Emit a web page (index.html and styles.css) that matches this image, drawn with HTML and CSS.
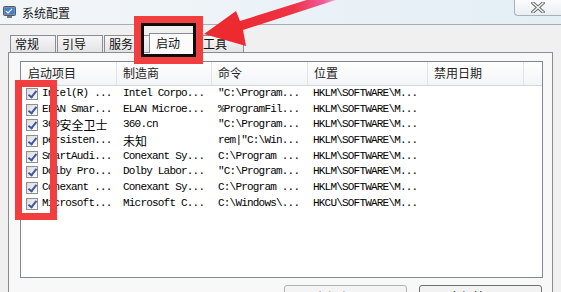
FILE: index.html
```html
<!DOCTYPE html>
<html lang="zh-CN">
<head>
    <meta charset="UTF-8">
    <title>系统配置</title>
    <link rel="stylesheet" href="styles.css">
</head>
<body>
    <div class="window">
        <div class="titlebar">
            <svg class="app-icon" width="13" height="13" viewBox="0 0 13 13">
                <rect x="0.5" y="0.5" width="12" height="9" rx="1" fill="#7d8ea6" stroke="#4d5b70"/>
                <rect x="2" y="2" width="9" height="6" fill="#3f7fd0"/>
                <path d="M3 5 l2 2 l4-4" fill="none" stroke="#ffffff" stroke-width="1.2"/>
                <rect x="4" y="10" width="5" height="2" fill="#6b7a90"/>
            </svg>
            <span class="title">系统配置</span>
            <div class="close">
                <svg width="14" height="11" viewBox="0 0 14 11">
                    <path d="M2 1 L12 10 M12 1 L2 10" stroke="#6d6d6d" stroke-width="3.4" stroke-linecap="square"/>
                    <path d="M2 1 L12 10 M12 1 L2 10" stroke="#f4f4f4" stroke-width="1.4" stroke-linecap="square"/>
                </svg>
            </div>
        </div>

        <div class="tabs">
            <div class="tab">常规</div>
            <div class="tab">引导</div>
            <div class="tab">服务</div>
            <div class="tab active">启动</div>
            <div class="tab">工具</div>
        </div>

        <div class="panel">
            <div class="listview">
                <div class="lv-head">
                    <div>启动项目</div>
                    <div>制造商</div>
                    <div>命令</div>
                    <div>位置</div>
                    <div>禁用日期</div>
                    <div></div>
                </div>
                <div class="lv-row">
                    <div class="first"><span class="chk"></span>Intel(R) ...</div>
                    <div>Intel Corpo...</div>
                    <div>"C:\Program...</div>
                    <div>HKLM\SOFTWARE\M...</div>
                </div>
                <div class="lv-row">
                    <div class="first"><span class="chk"></span>ELAN Smar...</div>
                    <div>ELAN Microe...</div>
                    <div>%ProgramFil...</div>
                    <div>HKLM\SOFTWARE\M...</div>
                </div>
                <div class="lv-row">
                    <div class="first"><span class="chk"></span>360<span class="cjk">安全卫士</span></div>
                    <div>360.cn</div>
                    <div>"C:\Program...</div>
                    <div>HKLM\SOFTWARE\M...</div>
                </div>
                <div class="lv-row">
                    <div class="first"><span class="chk"></span>persisten...</div>
                    <div><span class="cjk">未知</span></div>
                    <div>rem|"C:\Win...</div>
                    <div>HKLM\SOFTWARE\M...</div>
                </div>
                <div class="lv-row">
                    <div class="first"><span class="chk"></span>SmartAudi...</div>
                    <div>Conexant Sy...</div>
                    <div>C:\Program ...</div>
                    <div>HKLM\SOFTWARE\M...</div>
                </div>
                <div class="lv-row">
                    <div class="first"><span class="chk"></span>Dolby Pro...</div>
                    <div>Dolby Labor...</div>
                    <div>"C:\Program...</div>
                    <div>HKLM\SOFTWARE\M...</div>
                </div>
                <div class="lv-row">
                    <div class="first"><span class="chk"></span>Conexant ...</div>
                    <div>Conexant Sy...</div>
                    <div>C:\Program ...</div>
                    <div>HKLM\SOFTWARE\M...</div>
                </div>
                <div class="lv-row">
                    <div class="first"><span class="chk"></span>Microsoft...</div>
                    <div>Microsoft C...</div>
                    <div>C:\Windows\...</div>
                    <div>HKCU\SOFTWARE\M...</div>
                </div>
            </div>

            <div class="buttons">
                <button class="btn" disabled>全部启用(E)</button>
                <button class="btn">全部禁用(D)</button>
            </div>
        </div>
    </div>

    <!-- пометки поверх окна -->
    <div class="mark mark-tab"><div class="frame"></div></div>
    <div class="mark mark-checks"></div>
    <svg class="arrow" width="561" height="80" viewBox="0 0 561 80">
        <defs>
            <linearGradient id="arrowFill" gradientUnits="userSpaceOnUse" x1="240" y1="0" x2="338" y2="0">
                <stop offset="0" stop-color="#ec2a30"/>
                <stop offset="0.55" stop-color="#ee3346"/>
                <stop offset="0.85" stop-color="#f05a9a"/>
                <stop offset="1" stop-color="#f6b3d3"/>
            </linearGradient>
        </defs>
        <polygon points="204,34 236,11 240,21 313,-2 342,-2 243,30 246,46" fill="url(#arrowFill)"/>
    </svg>
</body>
</html>
```

FILE: styles.css
```css
body {
    margin: 0;
    width: 561px;
    height: 292px;
    overflow: hidden;
    background: #f0f0f0;
    font-family: "Noto Sans CJK SC", "Liberation Sans", sans-serif;
    font-size: 12px;
    color: #000;
    position: relative;
}
.titlebar {
    height: 24px;
    border-bottom: 1px solid #a8adb3;
    background: linear-gradient(to right, #f3f6f9, #e3eef5);
    display: flex;
    align-items: center;
    padding-left: 3px;
}
.app-icon {
    margin-top: 1px;
}
.title {
    margin-left: 6px;
    font-size: 12px;
    color: #1b1b1b;
}
.close {
    margin-left: auto;
    align-self: flex-start;
    width: 46px;
    height: 15px;
    border: 1px solid #aab1ba;
    border-top: none;
    border-right: none;
    border-bottom-left-radius: 4px;
    background: linear-gradient(#fbfcfd, #e9eef3);
    display: flex;
    align-items: center;
    justify-content: center;
}
.tabs {
    height: 27px;
    display: flex;
    align-items: flex-end;
    padding-left: 10px;
    position: relative;
    z-index: 1;
}
.tab {
    box-sizing: border-box;
    width: 46px;
    height: 17px;
    margin-right: 1px;
    padding-left: 4px;
    border: 1px solid #898c95;
    border-bottom: none;
    background: linear-gradient(#f6f6f6, #e4e4e4);
    line-height: 16px;
    color: #111;
}
.tab.active {
    width: 50px;
    height: 20px;
    margin-left: -2px;
    margin-right: -1px;
    margin-bottom: -1px;
    padding-left: 6px;
    background: #fbfbfb;
    line-height: 18px;
}
.panel {
    margin: 0 8px;
    height: 260px;
    border: 1px solid #898c95;
    background: #f8f8f8;
    padding: 8px 9px 0 11px;
}
.listview {
    height: 215px;
    border: 1px solid #828790;
    background: #fff;
}
.lv-head,
.lv-row {
    display: grid;
    grid-template-columns: 95px 95px 96px 120px 96px 1fr;
}
.lv-head {
    height: 23px;
    border-bottom: 1px solid #d5d5d5;
    background: linear-gradient(#ffffff, #f3f4f6);
}
.lv-head div {
    padding-left: 7px;
    line-height: 22px;
    color: #222;
}
.lv-head div + div {
    border-left: 1px solid #e2e3e5;
    padding-left: 6px;
}
.lv-row {
    height: 15.7px;
    font-family: "Liberation Mono", "Noto Sans CJK SC", monospace;
    font-size: 11px;
    letter-spacing: -0.8px;
    line-height: 15.7px;
}
.lv-row div {
    padding-left: 7px;
    white-space: nowrap;
    overflow: hidden;
}
.lv-row div:nth-child(4) {
    padding-left: 6px;
}
.lv-row .first {
    display: flex;
    align-items: center;
    padding-left: 5px;
}
.cjk {
    font-family: "Noto Sans CJK SC", sans-serif;
    font-size: 12px;
    letter-spacing: 0;
}
.chk {
    flex: none;
    box-sizing: border-box;
    width: 12px;
    height: 12px;
    margin-right: 4px;
    border: 1px solid #8e8f8f;
    background: linear-gradient(135deg, #d8dbe0, #fdfdfd);
    position: relative;
}
.chk::after {
    content: "";
    position: absolute;
    left: 3px;
    top: 0;
    width: 3px;
    height: 7px;
    border: solid #41579a;
    border-width: 0 2px 2px 0;
    transform: rotate(38deg);
}
.buttons {
    display: flex;
    justify-content: flex-end;
    gap: 12px;
    margin-top: 7px;
    padding-right: 1px;
}
.btn {
    width: 123px;
    height: 23px;
    border: 1px solid #707070;
    border-radius: 3px;
    background: linear-gradient(#f2f2f2 50%, #dddddd 50%);
    font-family: "Noto Sans CJK SC", sans-serif;
    font-size: 12px;
    color: #000;
    padding: 0;
}
.btn:disabled {
    border-color: #adb2b5;
    background: #f4f4f4;
    color: #838383;
}
.mark {
    position: absolute;
    box-sizing: border-box;
    border: 7px solid #f23e3e;
    z-index: 2;
}
.mark-tab {
    left: 134px;
    top: 16px;
    width: 69px;
    height: 48px;
}
.mark-tab .frame {
    height: 100%;
    border: 3px solid #0c0c0c;
    box-sizing: border-box;
}
.mark-checks {
    left: 15px;
    top: 80px;
    width: 42px;
    height: 140px;
}
.arrow {
    position: absolute;
    left: 0;
    top: 0;
    z-index: 3;
}
```
